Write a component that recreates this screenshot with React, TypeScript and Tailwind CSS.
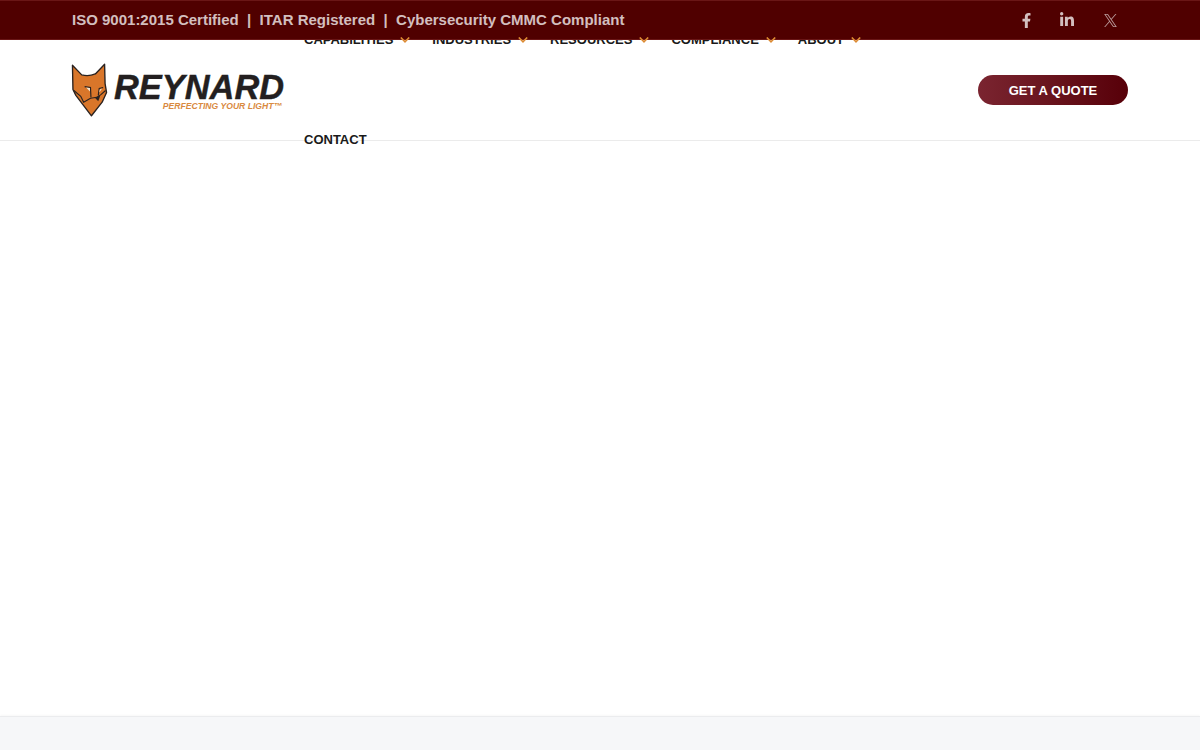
import { FaFacebookF, FaLinkedinIn } from "react-icons/fa";

const navItems = ["CAPABILITIES", "INDUSTRIES", "RESOURCES", "COMPLIANCE", "ABOUT"];

function Chevron() {
  return (
    <svg width="10" height="6" viewBox="0 0 10 6" className="relative z-20 ml-[7px]" fill="none">
      <path d="M0.8 0.5 L5 4.8 L9.2 0.5" stroke="#dc8a32" strokeWidth="1.6" />
    </svg>
  );
}

function FoxLogo() {
  return (
    <svg width="37" height="55" viewBox="0 0 38 56" className="ml-[-1px] mt-[-1px] shrink-0">
      <path
        d="M1.500 3 L11 13 Q18 15 25 12 L34.500 2 L35 22 L36.500 31 L32 41 L21 55 L5 34 L2 28 Z"
        fill="#d9762a"
        stroke="#2a2220"
        strokeWidth="1.4"
        strokeLinejoin="round"
      />
      <path
        d="M3 29 L10 35 L13 41 L20 37 L27 36 L31 33 L35.500 29 M14 25 L20 26 L20.500 36 M33 26 L29 27 L28 34"
        fill="none"
        stroke="#2a2220"
        strokeWidth="1.2"
      />
      <path d="M15.500 26 L19.500 26.500 L19.500 30 Z M32 27 L29.500 28 L29 31 Z" fill="#f3e6d0" />
      <path d="M24 36 L30 34.500 L28 40 Z" fill="#2a2220" />
    </svg>
  );
}

export default function App() {
  return (
    <div className="flex h-screen flex-col overflow-hidden bg-white font-['Liberation_Sans',Arial,sans-serif]">
      <div className="relative z-10 flex h-10 shrink-0 items-center justify-between border-y border-[#6a1616] bg-[#500000] pl-[72px] pr-[83px]">
        <p className="text-[15px] font-bold text-white/75">
          ISO 9001:2015 Certified&nbsp; |&nbsp; ITAR Registered&nbsp; |&nbsp; Cybersecurity CMMC Compliant
        </p>
        <div className="flex items-center text-white/75">
          <FaFacebookF size={15} />
          <FaLinkedinIn size={16} className="ml-[25px]" />
          <svg width="13" height="13" viewBox="0 0 24 24" fill="currentColor" className="ml-[29px] opacity-80">
            <path d="M14.234 10.162 22.977 0h-2.072l-7.591 8.824L7.251 0H.258l9.168 13.343L.258 24H2.33l8.016-9.318L16.749 24h6.993zm-2.837 3.299-.929-1.329L3.076 1.56h3.182l5.965 8.532.929 1.329 7.754 11.09h-3.182z" />
          </svg>
        </div>
      </div>

      <header className="flex h-[101px] shrink-0 items-center border-b border-[#ebebeb] px-[72px]">
        <div className="flex w-[232px] shrink-0 items-center">
          <FoxLogo />
          <div className="ml-[6px] mt-[4px] flex flex-col">
            <span className="text-[34.4px] font-bold italic leading-[28px] text-[#231f20] [-webkit-text-stroke:0.4px_#231f20]">
              REYNARD
            </span>
            <span className="mr-[2px] self-end text-[8.6px] font-bold italic leading-[10px] text-[#d98a3f]">
              PERFECTING YOUR LIGHT™
            </span>
          </div>
        </div>

        <nav className="flex h-[200px] w-[600px] flex-wrap content-start">
          {navItems.map((item) => (
            <a key={item} className="mr-[22px] flex h-[100px] items-center text-[13px] font-bold text-[#1a1a1a]">
              {item}
              <Chevron />
            </a>
          ))}
          <a className="flex h-[100px] items-center text-[13px] font-bold text-[#1a1a1a]">CONTACT</a>
        </nav>

        <a className="ml-auto flex h-[30px] w-[150px] items-center justify-center rounded-full bg-gradient-to-r from-[#7a2430] to-[#570008] pt-px text-[13px] font-bold text-white">
          GET A QUOTE
        </a>
      </header>

      <main className="flex-1" />

      <footer className="h-[34px] shrink-0 border-t border-[#ebecee] bg-[#f6f7f9] shadow-[0_-1px_2px_rgba(0,0,0,0.03)]" />
    </div>
  );
}
